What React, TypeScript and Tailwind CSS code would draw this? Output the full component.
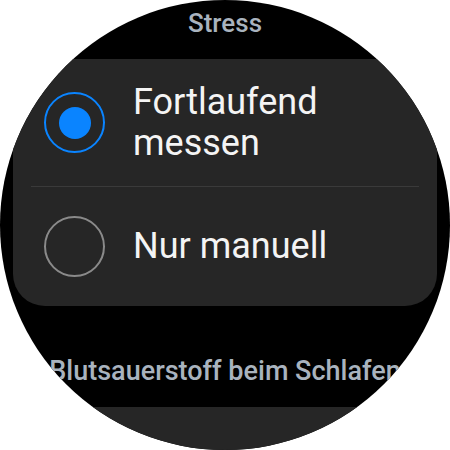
export default function App() {
    return (
        <div className="h-[450px] w-[450px] bg-white" style={{ fontFamily: "Roboto, 'Noto Sans', sans-serif" }}>
            <div className="flex h-full w-full flex-col overflow-hidden rounded-full bg-black">
                <div className="h-[59px] shrink-0 pt-[9px] text-center text-[26px] leading-[28px] font-medium text-[#a9b3be]">
                    Stress
                </div>

                <div className="mx-[13px] flex shrink-0 flex-col rounded-[32px] bg-[#262626]">
                    <RadioRow checked className="h-[127px]" label={["Fortlaufend", "messen"]} />
                    <div className="mx-[18px] h-px bg-[#3a3a3a]" />
                    <RadioRow className="h-[119px]" label={["Nur manuell"]} />
                </div>

                <div className="mt-[50px] shrink-0 whitespace-nowrap text-center text-[27px] leading-[30px] font-medium text-[#a9b3be]">
                    Blutsauerstoff beim Schlafen
                </div>

                <div className="mx-[13px] mt-[21px] h-[80px] shrink-0 rounded-[32px] bg-[#262626]" />
            </div>
        </div>
    );
}

function RadioRow({
    checked,
    className,
    label
}: {
    checked?: boolean;
    className?: string;
    label: string[];
}) {
    return (
        <div className={`flex items-center gap-[28px] pl-[31px] ${className ?? ""}`}>
            {checked ? (
                <div className="flex h-[61px] w-[61px] shrink-0 items-center justify-center rounded-full border-[2.5px] border-[#0a84ff]">
                    <div className="h-[32px] w-[32px] rounded-full bg-[#0a84ff]" />
                </div>
            ) : (
                <div className="h-[61px] w-[61px] shrink-0 rounded-full border-[2.5px] border-[#8a8a8a]" />
            )}
            <div className="flex flex-col text-[36px] leading-[41px] text-[#f4f4f4]">
                {label.map((l) => (
                    <span key={l}>{l}</span>
                ))}
            </div>
        </div>
    );
}
